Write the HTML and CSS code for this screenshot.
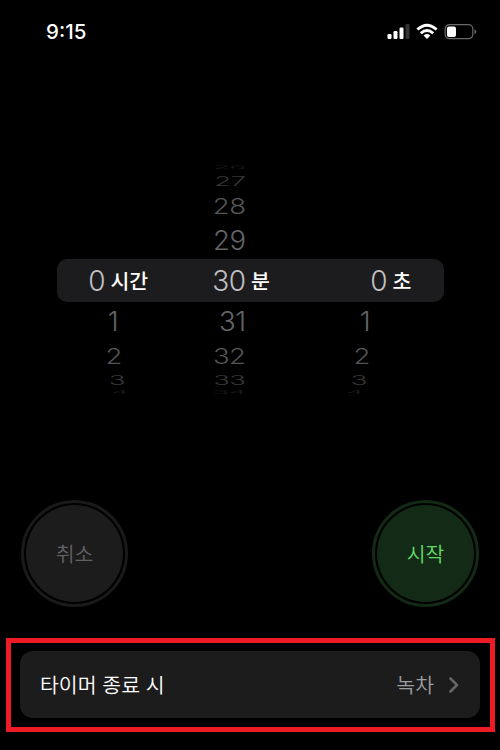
FILE: index.html
```
<!DOCTYPE html>
<html lang="ko">
<head>
  <meta charset="UTF-8" />
  <meta name="viewport" content="width=device-width, initial-scale=1.0" />
  <title>타이머</title>
  <link rel="stylesheet" href="styles.css">
</head>
<body>
  <div class="screen">
    <header class="status-bar">
      <span class="clock">9:15</span>
      <svg class="status-icons" width="90" height="18" viewBox="0 0 90 18">
        <!-- signal -->
        <g fill="#fff">
          <rect x="0.5" y="11" width="4" height="5" rx="1.2" />
          <rect x="6.5" y="8" width="4" height="8" rx="1.2" />
          <rect x="12.5" y="4.5" width="4" height="11.5" rx="1.2" />
          <rect x="18.5" y="1" width="4" height="15" rx="1.2" fill="#333335" />
        </g>
        <!-- wifi -->
        <g fill="none" stroke="#fff" stroke-width="2.9">
          <path d="M30.4 6.5 Q40 -2 49.6 6.5" />
          <path d="M33.8 10.3 Q40 4.6 46.2 10.3" />
        </g>
        <path d="M36.6 12.5 Q40 9.7 43.4 12.5 L40 16 Z" fill="#fff" />
        <!-- battery -->
        <rect x="58.2" y="1.7" width="27.6" height="14" rx="4.2" fill="none" stroke="#6a6a6c" stroke-width="1.2" />
        <rect x="60" y="3.5" width="9" height="10.5" rx="2" fill="#fff" />
        <path d="M87.5 6.2 Q89.3 7 89.3 8.7 Q89.3 10.4 87.5 11.2 Z" fill="#6a6a6c" />
      </svg>
    </header>

    <main>
      <div class="picker">
        <div class="wheel hours">
          <div class="row far"></div>
          <div class="row third"></div>
          <div class="row second"></div>
          <div class="row first"></div>
          <div class="row selected"><span class="num">0</span><span class="unit">시간</span></div>
          <div class="row first"><span class="num">1</span></div>
          <div class="row second"><span class="num">2</span></div>
          <div class="row third"><span class="num">3</span></div>
          <div class="row far"><span class="num">4</span></div>
        </div>
        <div class="wheel minutes">
          <div class="row far"><span class="num">26</span></div>
          <div class="row third"><span class="num">27</span></div>
          <div class="row second"><span class="num">28</span></div>
          <div class="row first"><span class="num">29</span></div>
          <div class="row selected"><span class="num">30</span><span class="unit">분</span></div>
          <div class="row first"><span class="num">31</span></div>
          <div class="row second"><span class="num">32</span></div>
          <div class="row third"><span class="num">33</span></div>
          <div class="row far"><span class="num">34</span></div>
        </div>
        <div class="wheel seconds">
          <div class="row far"></div>
          <div class="row third"></div>
          <div class="row second"></div>
          <div class="row first"></div>
          <div class="row selected"><span class="num">0</span><span class="unit">초</span></div>
          <div class="row first"><span class="num">1</span></div>
          <div class="row second"><span class="num">2</span></div>
          <div class="row third"><span class="num">3</span></div>
          <div class="row far"><span class="num">4</span></div>
        </div>
      </div>

      <div class="actions">
        <button class="round cancel"><span>취소</span></button>
        <button class="round start"><span>시작</span></button>
      </div>

      <div class="highlight">
        <div class="option">
          <span class="option-label">타이머 종료 시</span>
          <span class="option-value">녹차</span>
          <svg class="chevron" width="10" height="16" viewBox="0 0 10 16">
            <path d="M1.5 1.5 L8 8 L1.5 14.5" fill="none" stroke="#67676b" stroke-width="2.5" stroke-linecap="round" stroke-linejoin="round" />
          </svg>
        </div>
      </div>
    </main>
  </div>
</body>
</html>
```

FILE: styles.css
```
* {
  box-sizing: border-box;
}
body {
  margin: 0;
  background: #000;
  color: #fff;
  font-family: Inter, "Noto Sans CJK KR", sans-serif;
}
.screen {
  width: 500px;
  height: 750px;
  overflow: hidden;
}
.status-bar {
  display: flex;
  justify-content: space-between;
  align-items: center;
  height: 64px;
  padding: 0 23px 0 46px;
}
.clock {
  padding-bottom: 2px;
  font-size: 20.5px;
  font-weight: 500;
}

/* timer wheels */
.picker {
  display: grid;
  grid-template-columns: repeat(3, 129px);
  width: 387px;
  margin: 100px 0 0 57px;
}
.row {
  display: flex;
  align-items: center;
  color: #646466;
}
.num {
  flex: none;
  font-size: 27.5px;
  font-weight: 350;
  line-height: 28px;
  letter-spacing: -0.5px;
  text-align: right;
}
.hours .num {
  width: 48px;
}
.minutes .num {
  width: 59.5px;
}
.seconds .num {
  width: 72px;
}
.selected {
  height: 43px;
  background: #1c1c1e;
}
.selected .num {
  padding-top: 1px;
  color: #c0c0c2;
  font-size: 28px;
}
.hours .selected {
  border-radius: 10px 0 0 10px;
}
.seconds .selected {
  border-radius: 0 10px 10px 0;
}
.unit {
  margin-left: 5.5px;
  padding-top: 2px;
  color: #fff;
  font-size: 20.5px;
  font-weight: 500;
  line-height: 28px;
}
.first {
  height: 38px;
}
.first .num {
  transform: scaleY(0.96);
}
.second {
  height: 31px;
  color: #555557;
}
.second .num {
  transform: scaleY(0.77);
}
.third {
  height: 18px;
  color: #363638;
}
.third .num {
  transform: scaleY(0.48);
}
.far {
  height: 8px;
  color: #1c1c1d;
}
.far .num {
  transform: scaleY(0.15);
}

/* outer wheels bend towards the middle */
.hours .first {
  padding-left: 13px;
}
.hours .second {
  padding-left: 17px;
}
.hours .third {
  padding-left: 20px;
}
.hours .far {
  padding-left: 23px;
}
.seconds .first {
  margin-left: -17px;
}
.seconds .second {
  margin-left: -17px;
}
.seconds .third {
  margin-left: -20px;
}
.seconds .far {
  margin-left: -24px;
}

.actions {
  display: flex;
  justify-content: space-between;
  padding: 103px 21px 0;
}
.round {
  width: 107px;
  height: 107px;
  padding: 2px;
  border: 3px solid;
  border-radius: 50%;
  background: transparent;
  font-family: inherit;
  font-size: 20.5px;
  font-weight: 350;
}
.round span {
  display: flex;
  align-items: center;
  justify-content: center;
  height: 100%;
  padding-bottom: 2px;
  border-radius: 50%;
}
.cancel {
  border-color: #1a1a1a;
  color: #626265;
}
.cancel span {
  background: #1c1c1c;
}
.start {
  border-color: #132a16;
  color: #65d968;
}
.start span {
  background: #132a16;
}

.highlight {
  width: 489px;
  height: 94px;
  margin: 31px 0 0 6px;
  padding: 8px 10px 8px 9px;
  border: 5px solid #ed1c24;
}
.option {
  display: flex;
  align-items: center;
  height: 67px;
  padding: 0 21px 0 20px;
  border-radius: 13px;
  background: #1c1c1c;
  font-size: 20.5px;
  font-weight: 350;
}
.option-label,
.option-value {
  padding-bottom: 2px;
}
.option-value {
  margin-left: auto;
  color: #9c9ca1;
}
.chevron {
  margin-left: 15px;
}
```
